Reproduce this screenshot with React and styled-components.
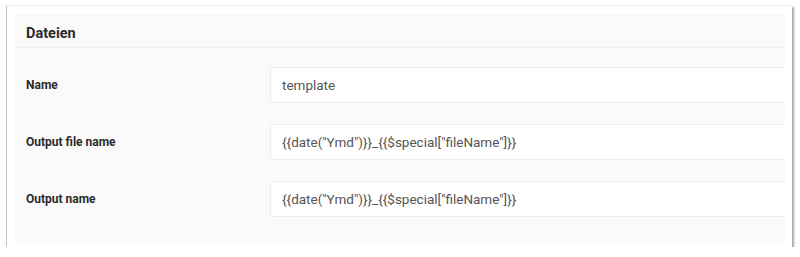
import React from "react";
import styled, { createGlobalStyle } from "styled-components";

const Global = createGlobalStyle`
  html, body { margin: 0; padding: 0; background: #ffffff; }
  body { font-family: Roboto, "Noto Sans", Arial, sans-serif; }
`;

const Frame = styled.div`
  margin: 5px 0 0 6px;
  width: 786px;
  height: 242px;
  box-sizing: border-box;
  background: #ffffff;
  border-left: 1px solid #c8c8c8;
  border-top: 1px solid #ececec;
  box-shadow: 2px 2px 2px rgba(0, 0, 0, 0.35);
  padding: 8px 0 0 8px;
`;

const Panel = styled.section`
  width: 770px;
  height: 229px;
  background: #fafafa;
  overflow: hidden;
  display: flex;
  flex-direction: column;
`;

const Header = styled.h2`
  margin: 0;
  height: 34px;
  box-sizing: border-box;
  padding: 11px 0 0 11px;
  font-size: 14.5px;
  line-height: 18px;
  font-weight: 700;
  color: #2b2b2b;
  border-bottom: 1px solid #f2f2f2;
`;

const Body = styled.div`
  padding-top: 19px;
  display: flex;
  flex-direction: column;
  gap: 21px;
`;

const Row = styled.div`
  display: grid;
  grid-template-columns: 255px 1fr;
  align-items: center;
  height: 36px;
`;

const Label = styled.label`
  padding-left: 11px;
  font-size: 12px;
  font-weight: 700;
  color: #2b2b2b;
`;

const Input = styled.div`
  height: 36px;
  box-sizing: border-box;
  background: #ffffff;
  border: 1px solid #ededed;
  border-right: none;
  border-radius: 3px 0 0 3px;
  padding: 0 11px;
  display: flex;
  align-items: center;
  font-size: 13.5px;
  color: #555555;
  white-space: nowrap;
`;

const fields = [
  { label: "Name", value: "template" },
  { label: "Output file name", value: '{{date("Ymd")}}_{{$special["fileName"]}}' },
  { label: "Output name", value: '{{date("Ymd")}}_{{$special["fileName"]}}' },
];

export default function App() {
  return (
    <>
      <Global />
      <Frame>
        <Panel>
          <Header>Dateien</Header>
          <Body>
            {fields.map((f) => (
              <Row key={f.label}>
                <Label>{f.label}</Label>
                <Input>{f.value}</Input>
              </Row>
            ))}
          </Body>
        </Panel>
      </Frame>
    </>
  );
}
